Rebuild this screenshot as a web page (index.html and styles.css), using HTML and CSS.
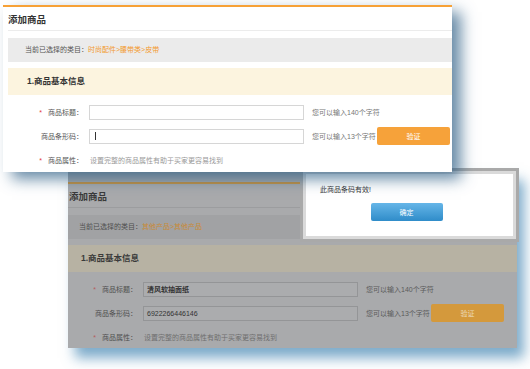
FILE: index.html
```html
<!DOCTYPE html>
<html lang="zh-CN">
<head>
    <meta charset="UTF-8">
    <title>添加商品</title>
    <link rel="stylesheet" href="styles.css">
</head>
<body>
    <div class="shot shot-front">
        <div class="page">
            <h2 class="page-title">添加商品</h2>
            <div class="crumb">当前已选择的类目：<span class="crumb-path">时尚配件&gt;腰带类&gt;皮带</span></div>
            <div class="section-head">1.商品基本信息</div>
            <div class="form">
                <div class="row">
                    <span class="label"><i>*</i>商品标题：</span>
                    <div class="field"></div>
                    <span class="hint">您可以输入140个字符</span>
                </div>
                <div class="row">
                    <span class="label">商品条形码：</span>
                    <div class="field"><span class="caret"></span></div>
                    <span class="hint">您可以输入13个字符</span>
                    <button class="btn-check">验证</button>
                </div>
                <div class="row">
                    <span class="label"><i>*</i>商品属性：</span>
                    <span class="note">设置完整的商品属性有助于买家更容易找到</span>
                </div>
            </div>
        </div>
    </div>

    <div class="shot shot-back">
        <div class="page">
            <h2 class="page-title">添加商品</h2>
            <div class="crumb">当前已选择的类目：<span class="crumb-path">其他产品&gt;其他产品</span></div>
            <div class="section-head">1.商品基本信息</div>
            <div class="form">
                <div class="row">
                    <span class="label"><i>*</i>商品标题：</span>
                    <div class="field"><b>清风软抽面纸</b></div>
                    <span class="hint">您可以输入140个字符</span>
                </div>
                <div class="row">
                    <span class="label">商品条形码：</span>
                    <div class="field">6922266446146</div>
                    <span class="hint">您可以输入13个字符</span>
                    <button class="btn-check">验证</button>
                </div>
                <div class="row">
                    <span class="label"><i>*</i>商品属性：</span>
                    <span class="note">设置完整的商品属性有助于买家更容易找到</span>
                </div>
            </div>
        </div>
    </div>

    <div class="dialog">
        <div class="dialog-body">
            <p class="dialog-msg">此商品条码有效!</p>
            <button class="btn-ok">确定</button>
        </div>
    </div>
</body>
</html>
```

FILE: styles.css
```css
body {
    margin: 0;
    width: 530px;
    height: 369px;
    overflow: hidden;
    background: #fff;
    font-family: "Liberation Sans", "Noto Sans CJK SC", sans-serif;
    color: #555;
    position: relative;
}

/* the two screenshots lie on a free canvas */
.shot {
    position: absolute;
    overflow: hidden;
    background: #fff;
}
.shot-front {
    left: 3px;
    top: 5px;
    width: 449px;
    height: 167px;
    z-index: 3;
    box-shadow: 9px 7px 14px rgba(40, 90, 130, 0.7);
}
.shot-back {
    left: 68px;
    top: 170px;
    width: 449px;
    height: 178px;
    z-index: 1;
    background: #a9aaac;
    box-shadow: 7px 10px 12px rgba(70, 135, 180, 0.7);
}

.page {
    border-top: 2px solid #f7a136;
    padding-left: 5px;
}
.shot-back .page {
    margin-top: 12px;
    margin-left: -11px;
    border-top-color: #c9923e;
}

.page-title {
    margin: 0;
    padding-top: 3px;
    line-height: 20px;
    font-size: 9.5px;
    font-weight: bold;
    color: #333;
    border-bottom: 1px solid #ececec;
}
.shot-back .page-title {
    padding-left: 7px;
}

/* 类目 */
.crumb {
    margin-top: 7px;
    height: 24px;
    line-height: 24px;
    padding-left: 17px;
    font-size: 7px;
    color: #555;
    background: #ebebeb;
}
.crumb-path {
    color: #f39a2e;
}

.section-head {
    margin-top: 6px;
    height: 27px;
    line-height: 27px;
    padding-left: 19px;
    font-size: 8.5px;
    font-weight: bold;
    color: #333;
    background: #fcf4df;
}

/* 表单 */
.form {
    padding-top: 8px;
    display: flex;
    flex-direction: column;
    gap: 6px;
}
.row {
    display: flex;
    align-items: center;
    height: 18px;
    font-size: 7px;
}
.label {
    width: 75px;
    text-align: right;
    color: #555;
}
.label i {
    font-style: normal;
    color: #e4393c;
    margin-right: 6px;
}
.field {
    margin-left: 6px;
    width: 207px;
    height: 13px;
    line-height: 13px;
    padding: 0 3px;
    border: 1px solid #d6d6d6;
    background: #fff;
    color: #333;
    display: flex;
    align-items: center;
}
.caret {
    width: 1px;
    height: 8px;
    margin-left: 2px;
    background: #333;
}
.hint {
    margin-left: 8px;
    width: 65px;
    color: #777;
    white-space: nowrap;
}
.btn-check {
    width: 73px;
    height: 18px;
    border: none;
    border-radius: 2px;
    padding: 0;
    background: #f6a23a;
    color: #fff;
    font-family: inherit;
    font-size: 7px;
}
.note {
    margin-left: 7px;
    color: #999;
}

/* 遮罩下的截图 */
.shot-back .page-title,
.shot-back .section-head {
    color: #3a3a3a;
}
.shot-back .page-title {
    border-bottom-color: #9c9d9f;
}
.shot-back .crumb {
    background: #a1a2a4;
    color: #4f4f4f;
}
.shot-back .crumb-path {
    color: #c98a36;
}
.shot-back .section-head {
    background: #b7b2a3;
}
.shot-back .label {
    color: #4f4f4f;
}
.shot-back .label i {
    color: #b65e5e;
}
.shot-back .field {
    background: #abacae;
    border-color: #949597;
    color: #333;
}
.shot-back .hint {
    color: #5b5b5b;
}
.shot-back .btn-check {
    background: #d4993c;
    color: #ecd9b6;
}
.shot-back .note {
    color: #6f6f6f;
}

/* 提示框 */
.dialog {
    position: absolute;
    left: 300px;
    top: 168px;
    width: 207px;
    height: 62px;
    z-index: 2;
    border: 3px solid #a9a9a9;
    padding: 3px;
    background: #dadada;
}
.dialog-body {
    height: 100%;
    background: #fff;
    display: flex;
    flex-direction: column;
    align-items: center;
}
.dialog-msg {
    align-self: flex-start;
    margin: 11px 0 0 14px;
    font-size: 7px;
    line-height: 9px;
    color: #333;
}
.btn-ok {
    margin-top: 9px;
    margin-right: 6px;
    width: 72px;
    height: 18px;
    border: none;
    border-radius: 2px;
    padding: 0;
    background: linear-gradient(#66b6e8, #2f8cc9);
    color: #fff;
    font-family: inherit;
    font-size: 7px;
}
```
